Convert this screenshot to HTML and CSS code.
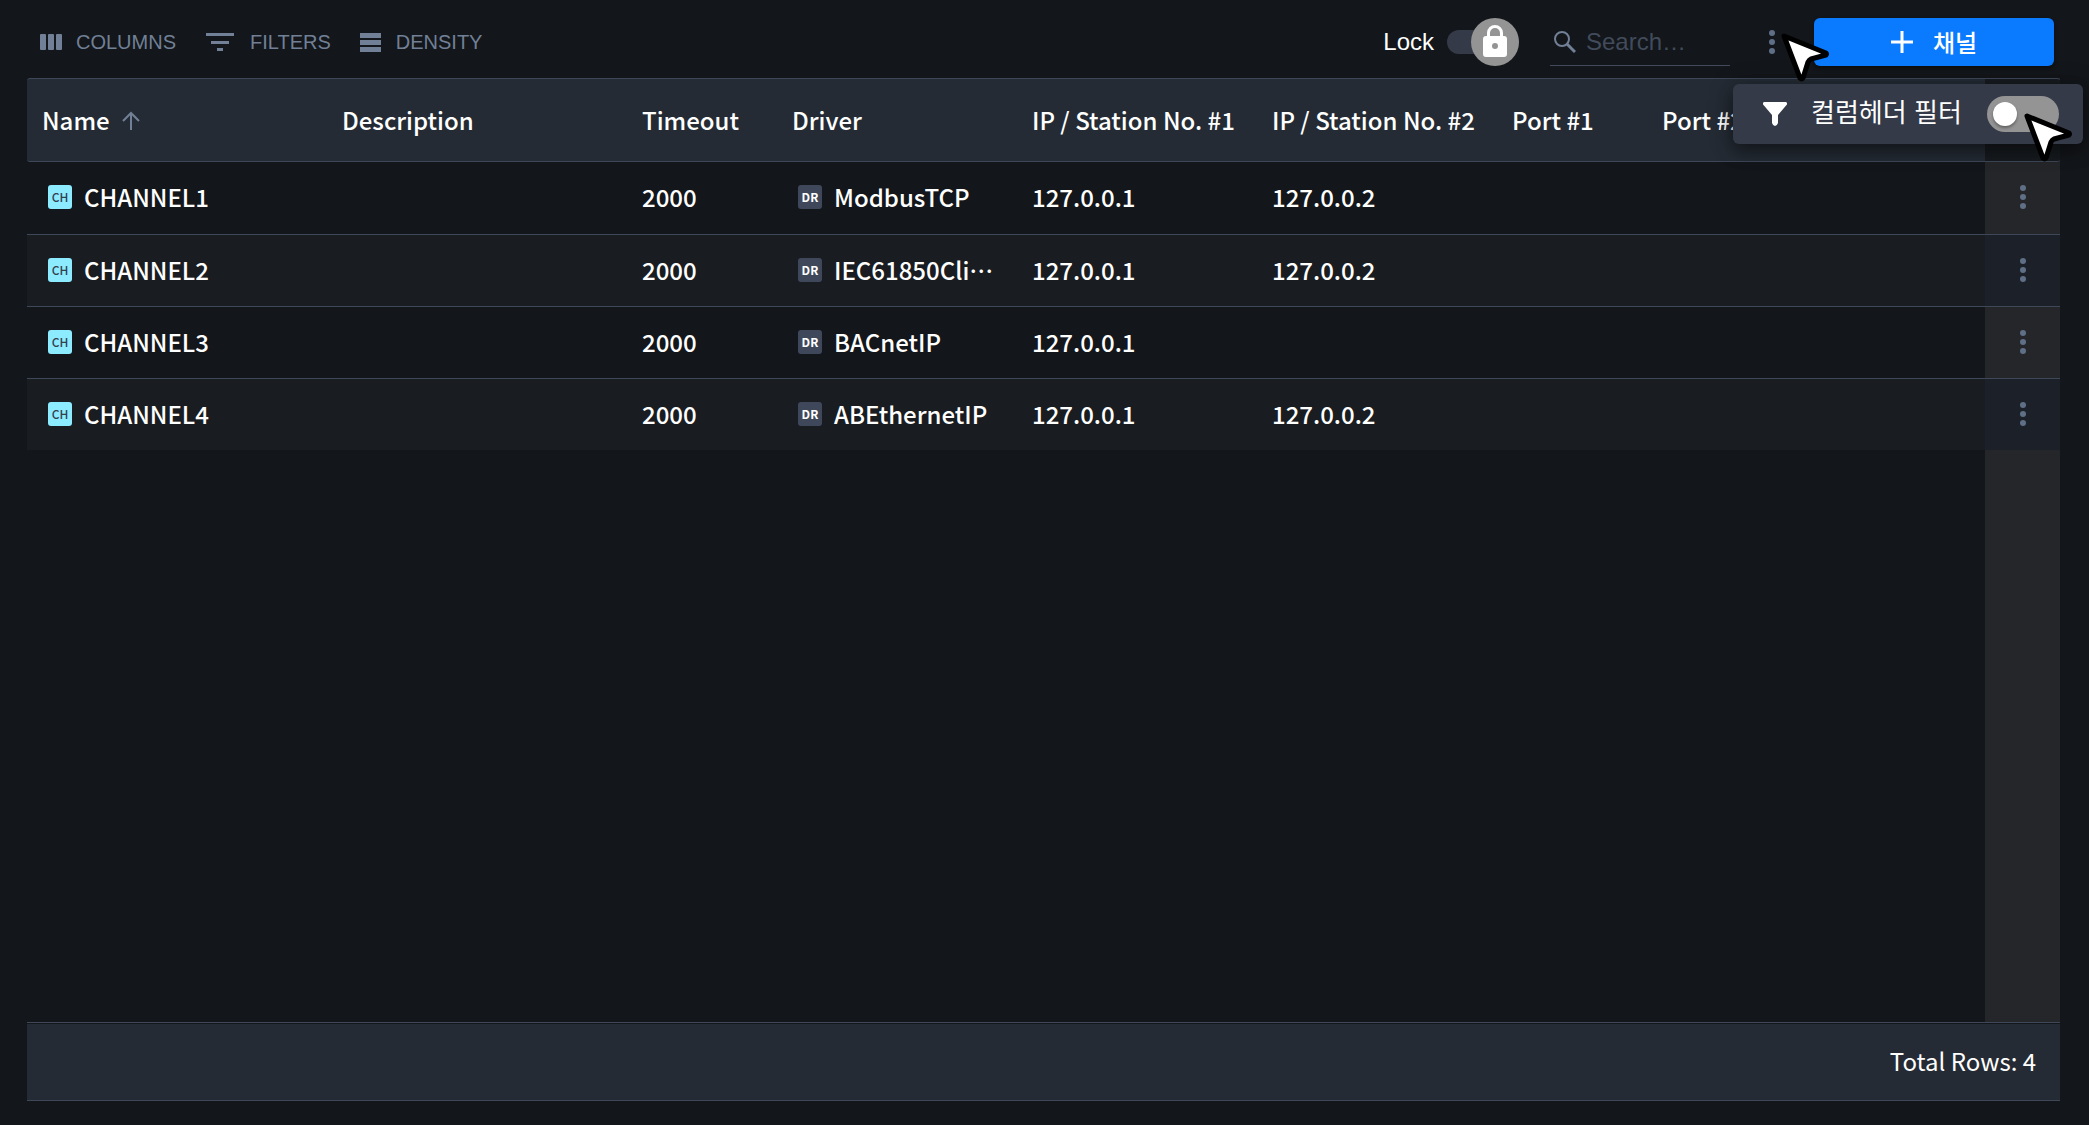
FILE: index.html
```html
<!DOCTYPE html>
<html lang="en">
<head>
<meta charset="utf-8">
<meta name="viewport" content="width=device-width, initial-scale=1">
<title>Channels</title>
<link rel="stylesheet" href="styles.css">
</head>
<body>
<svg class="defs" aria-hidden="true">
  <symbol id="dots" viewBox="0 0 24 24"><circle cx="12" cy="3" r="3"/><circle cx="12" cy="12" r="3"/><circle cx="12" cy="21" r="3"/></symbol>
  <symbol id="pointer" viewBox="0 0 50 50"><path d="M3 3 45 20Q46 21 45 22L30 26Q28 27 27 29L22 45Q21 47 19 45Z" fill="#fff" stroke="#000" stroke-width="5" stroke-linejoin="round"/></symbol>
</svg>
<main class="page">
  <header class="toolbar">
    <div class="tools">
      <button class="tool" type="button">
        <svg width="24" height="18" viewBox="0 0 24 18"><rect x="1" y="1" width="6" height="16" rx="1"/><rect x="9" y="1" width="6" height="16" rx="1"/><rect x="17" y="1" width="6" height="16" rx="1"/></svg>
        <span>COLUMNS</span>
      </button>
      <button class="tool tool-filters" type="button">
        <svg width="28" height="18" viewBox="0 0 28 18"><path d="M0 0h28v3H0zM5 8h18v3H5zM11 15h6v3h-6z"/></svg>
        <span>FILTERS</span>
      </button>
      <button class="tool tool-density" type="button">
        <svg width="21" height="19" viewBox="0 0 21 19"><path d="M0 0h21v5H0zM0 7h21v5H0zM0 14h21v5H0z"/></svg>
        <span>DENSITY</span>
      </button>
    </div>
    <label class="lock">
      <span>Lock</span>
      <input type="checkbox">
      <span class="lock-track"><span class="lock-thumb">
        <svg width="24" height="32" viewBox="0 0 24 32"><path fill="#fff" fill-rule="evenodd" d="M4 11V8a8 8 0 0 1 16 0v3h1a3 3 0 0 1 3 3v15a3 3 0 0 1-3 3H3a3 3 0 0 1-3-3V14a3 3 0 0 1 3-3Zm3 0h10V8A5 5 0 0 0 7 8Zm5 7a3 3 0 1 0 0 6 3 3 0 0 0 0-6Z"/></svg>
      </span></span>
    </label>
    <label class="search">
      <svg class="line-icon" width="22" height="22" viewBox="0 0 22 22"><circle cx="8" cy="8" r="7" stroke-width="2"/><path d="m13 13 8 8" stroke-width="3"/></svg>
      <input type="text" placeholder="Search…" aria-label="Search">
    </label>
    <div class="more-wrap">
      <button class="more" type="button" aria-label="More"><svg width="24" height="24"><use href="#dots"/></svg></button>
      <svg class="pointer" width="50" height="50"><use href="#pointer"/></svg>
      <div class="menu">
        <svg width="24" height="24" viewBox="0 0 24 24"><path fill="#fff" d="M1 0h22q2 1 .5 3L15 13v8q-1 3-3 3t-3-3v-8L.5 3Q-1 1 1 0Z"/></svg>
        <label for="header-filter" lang="ko">컬럼헤더 필터</label>
        <input class="switch" id="header-filter" type="checkbox">
        <svg class="menu-pointer" width="50" height="50"><use href="#pointer"/></svg>
      </div>
    </div>
    <button class="add" type="button">
      <svg width="22" height="22" viewBox="0 0 22 22"><path fill="#fff" d="M9.500 0h3v9.500H22v3h-9.500V22h-3v-9.500H0v-3h9.500z"/></svg>
      <span lang="ko">채널</span>
    </button>
  </header>

  <section class="grid">
    <table>
      <colgroup><col class="w300"><col class="w300"><col class="w150"><col class="w240"><col class="w240"><col class="w240"><col class="w150"><col><col class="w75"></colgroup>
      <thead>
        <tr>
          <th><span class="cell">Name <svg class="sort" width="18" height="19" viewBox="0 0 18 19"><path stroke-width="2" d="M9 19V2M1 10l8-8 8 8"/></svg></span></th>
          <th>Description</th><th>Timeout</th><th>Driver</th><th>IP / Station No. #1</th><th>IP / Station No. #2</th><th>Port #1</th><th>Port #2</th><th class="pinned"></th>
        </tr>
      </thead>
      <tbody>
        <tr>
          <td><span class="cell"><span class="tag ch">CH</span>CHANNEL1</span></td><td></td><td>2000</td>
          <td><span class="cell"><span class="tag dr">DR</span>ModbusTCP</span></td><td>127.0.0.1</td><td>127.0.0.2</td><td></td><td></td>
          <td class="pinned"><button class="more" type="button" aria-label="CHANNEL1 actions"><svg width="24" height="24"><use href="#dots"/></svg></button></td>
        </tr>
        <tr>
          <td><span class="cell"><span class="tag ch">CH</span>CHANNEL2</span></td><td></td><td>2000</td>
          <td><span class="cell" lang="ko"><span class="tag dr">DR</span>IEC61850Cli⋯</span></td><td>127.0.0.1</td><td>127.0.0.2</td><td></td><td></td>
          <td class="pinned"><button class="more" type="button" aria-label="CHANNEL2 actions"><svg width="24" height="24"><use href="#dots"/></svg></button></td>
        </tr>
        <tr>
          <td><span class="cell"><span class="tag ch">CH</span>CHANNEL3</span></td><td></td><td>2000</td>
          <td><span class="cell"><span class="tag dr">DR</span>BACnetIP</span></td><td>127.0.0.1</td><td></td><td></td><td></td>
          <td class="pinned"><button class="more" type="button" aria-label="CHANNEL3 actions"><svg width="24" height="24"><use href="#dots"/></svg></button></td>
        </tr>
        <tr>
          <td><span class="cell"><span class="tag ch">CH</span>CHANNEL4</span></td><td></td><td>2000</td>
          <td><span class="cell"><span class="tag dr">DR</span>ABEthernetIP</span></td><td>127.0.0.1</td><td>127.0.0.2</td><td></td><td></td>
          <td class="pinned"><button class="more" type="button" aria-label="CHANNEL4 actions"><svg width="24" height="24"><use href="#dots"/></svg></button></td>
        </tr>
      </tbody>
    </table>
  </section>
  <footer class="summary">Total Rows: 4</footer>
</main>
</body>
</html>
```

FILE: styles.css
```css
* { box-sizing: border-box; }

body {
  margin: 0;
  background: #13161a;
  color: #fff;
  font: 400 24px/36px "Noto Sans CJK KR", sans-serif;
}

button, input { margin: 0; padding: 0; border: 0; background: none; color: inherit; font: inherit; }
svg { display: block; flex: none; fill: currentColor; }
.line-icon, .sort { fill: none; stroke: #718096; }
.defs { position: absolute; width: 0; height: 0; }

.page {
  display: flex;
  flex-direction: column;
  min-height: 100vh;
  padding: 0 29px 24px 27px;
}

.toolbar {
  display: flex;
  align-items: center;
  height: 78px;
  padding: 6px 6px 0 12px;
}

.tools { display: flex; align-items: center; margin-right: auto; }
.tool {
  display: flex;
  align-items: center;
  gap: 13px;
  color: #718096;
  font: 400 20px/24px "Liberation Sans", sans-serif;
}
.tool-filters { gap: 16px; margin-left: 30px; }
.tool-density { gap: 15px; margin-left: 29px; }

.lock {
  display: flex;
  align-items: center;
  gap: 13px;
  font: 400 24px/30px "Liberation Sans", sans-serif;
}
.lock input { position: absolute; opacity: 0; }
.lock-track {
  display: flex;
  align-items: center;
  justify-content: flex-end;
  width: 72px;
  height: 24px;
  border-radius: 12px;
  background: #343a48;
}
.lock-thumb {
  display: flex;
  justify-content: center;
  flex: none;
  width: 48px;
  height: 48px;
  padding-top: 7px;
  border-radius: 50%;
  background: #949494;
}

.search {
  display: flex;
  align-items: center;
  gap: 10px;
  width: 180px;
  height: 48px;
  margin-left: 31px;
  padding-left: 4px;
  border-bottom: 1px solid #414b5b;
}
.search input {
  width: 100%;
  min-width: 0;
  font: 400 24px/30px "Liberation Sans", sans-serif;
}
.search input::placeholder { color: #414b5b; opacity: 1; }

.more { display: block; color: #5f6f86; }
.more-wrap { position: relative; margin: 0 30px; }
.pointer, .menu-pointer { position: absolute; z-index: 3; }
.pointer { left: 21px; top: 3px; }

.menu {
  position: absolute;
  z-index: 2;
  top: 54px;
  right: -299px;
  display: flex;
  align-items: center;
  gap: 24px;
  width: 350px;
  height: 60px;
  padding: 0 24px 0 30px;
  border-radius: 6px;
  background: #343a48;
  box-shadow: 0 8px 16px rgb(0 0 0 / 35%), 0 2px 24px rgb(0 0 0 / 25%);
  font-size: 26px;
  white-space: nowrap;
}
.menu label { padding-bottom: 6px; }
.menu-pointer { right: 9px; top: 29px; }
.switch {
  display: flex;
  align-items: center;
  flex: none;
  width: 72px;
  height: 36px;
  margin-left: auto;
  padding-left: 6px;
  border-radius: 18px;
  background: #949494;
  appearance: none;
}
.switch::before {
  content: "";
  width: 24px;
  height: 24px;
  border-radius: 50%;
  background: #fff;
  box-shadow: 0 2px 3px rgb(0 0 0 / 35%);
}

.add {
  display: flex;
  align-items: center;
  justify-content: center;
  gap: 20px;
  width: 240px;
  height: 48px;
  border-radius: 6px;
  background: #0a7aff;
  box-shadow: 0 2px 4px rgb(0 0 0 / 45%);
  font-weight: 500;
}

.grid {
  flex: 1;
  background: linear-gradient(#25262a, #25262a) right / 75px 100% no-repeat;
}
table { width: 100%; table-layout: fixed; border-collapse: separate; border-spacing: 0; }
.w75 { width: 75px; }
.w150 { width: 150px; }
.w240 { width: 240px; }
.w300 { width: 300px; }

th, td { padding: 0 15px; text-align: left; font-weight: 500; white-space: nowrap; }
th {
  height: 84px;
  border: solid #3e4858;
  border-width: 1px 0;
  background: #242b34;
}
th:first-child { border-radius: 3px 0 0 3px; }
th:last-child { border-radius: 0 3px 3px 0; }
th.pinned { background: #171b1f; }
td { height: 72px; padding-bottom: 2px; border-bottom: 1px solid #3e4858; background: #13161a; }
tbody tr:first-child td { height: 73px; }
tbody tr:last-child td { height: 71px; border-bottom: 0; }
tbody tr:nth-child(even) td { background: #191c20; }
td.pinned { padding: 0 0 2px; background: #25262a; }
tbody tr:nth-child(even) td.pinned { background: #1c2028; }
td .more { margin: 0 auto; }

/* Keep the Latin colon and slash at their plain height and width. */
th, .summary { font-feature-settings: "calt" 0; }

.cell { display: flex; align-items: center; gap: 12px; }
td .cell { padding-left: 6px; }
.tag {
  flex: none;
  width: 24px;
  height: 24px;
  border-radius: 3px;
  font-size: 12px;
  line-height: 24px;
  text-align: center;
}
.ch { background: #8cebff; color: #343f50; }
.dr { background: #3f485a; font-weight: 700; }

.summary {
  display: flex;
  align-items: center;
  justify-content: flex-end;
  height: 79px;
  padding: 0 24px 2px;
  border: solid #3e4858;
  border-width: 1px 0;
  background: #242b34;
  box-shadow: inset 0 1px #13161a;
}
```
